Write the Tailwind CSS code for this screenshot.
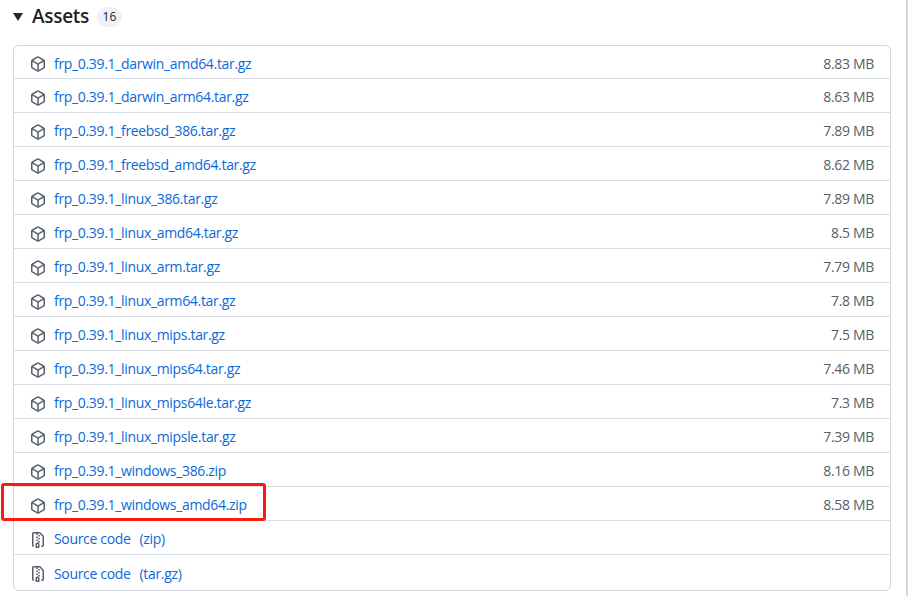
<!doctype html>
<html>
<head>
<meta charset="utf-8">
<title>Assets</title>
<script src="https://cdn.jsdelivr.net/npm/@tailwindcss/browser@4"></script>
</head>
<body class="bg-white">
<svg class="hidden">
  <symbol id="pkg" viewBox="0 0 16 16"><path d="m8.878.392 5.25 3.045c.54.314.872.89.872 1.514v6.098a1.75 1.75 0 0 1-.872 1.514l-5.25 3.045a1.75 1.75 0 0 1-1.756 0l-5.25-3.045A1.75 1.75 0 0 1 1 11.049V4.951c0-.624.332-1.201.872-1.514L7.122.392a1.75 1.75 0 0 1 1.756 0ZM7.875 1.69l-4.63 2.685L8 7.133l4.755-2.758-4.63-2.685a.248.248 0 0 0-.25 0ZM2.5 5.677v5.372c0 .09.047.171.125.216l4.625 2.683V8.432Zm6.25 8.271 4.625-2.683a.25.25 0 0 0 .125-.216V5.677L8.75 8.432Z"/></symbol>
  <symbol id="zip" viewBox="0 0 16 16"><path d="M3.5 1.75v11.5c0 .09.048.173.126.217a.75.75 0 0 1-.752 1.298A1.748 1.748 0 0 1 2 13.25V1.75C2 .784 2.784 0 3.75 0h5.586c.464 0 .909.185 1.237.513l2.914 2.914c.329.328.513.773.513 1.237v8.586A1.75 1.75 0 0 1 12.25 15h-.5a.75.75 0 0 1 0-1.5h.5a.25.25 0 0 0 .25-.25V4.664a.25.25 0 0 0-.073-.177L9.513 1.573a.25.25 0 0 0-.177-.073H7.25a.75.75 0 0 1 0 1.5h-.5a.75.75 0 0 1 0-1.5h-3a.25.25 0 0 0-.25.25Zm3.75 8.75h.5c.966 0 1.75.784 1.75 1.75v3a.75.75 0 0 1-.75.75h-2.5a.75.75 0 0 1-.75-.75v-3c0-.966.784-1.75 1.75-1.75ZM6 5.25a.75.75 0 0 1 .75-.75h.5a.75.75 0 0 1 0 1.5h-.5A.75.75 0 0 1 6 5.25Zm.75 2.25h.5a.75.75 0 0 1 0 1.5h-.5a.75.75 0 0 1 0-1.5ZM8 6.75A.75.75 0 0 1 8.75 6h.5a.75.75 0 0 1 0 1.5h-.5A.75.75 0 0 1 8 6.75ZM8.75 3h.5a.75.75 0 0 1 0 1.5h-.5a.75.75 0 0 1 0-1.5ZM8 9.75A.75.75 0 0 1 8.75 9h.5a.75.75 0 0 1 0 1.5h-.5A.75.75 0 0 1 8 9.75Zm-1 2.5v2.25h1v-2.25a.25.25 0 0 0-.25-.25h-.5a.25.25 0 0 0-.25.25Z"/></symbol>
</svg>
<div class="w-[908px] h-[596px] overflow-hidden border-r-2 border-[#d0d7de] pl-[13px] pr-[15px] font-['Open_Sans',sans-serif]">
  <div class="flex items-center h-[34px] text-[#1f2328]">
    <svg class="w-[10px] h-[8px]" viewBox="0 0 10 8"><path fill="#24292f" d="M0 0h10L5 8Z"/></svg>
    <span class="ml-[9px] pb-[2px] text-[19px] tracking-[-0.3px] font-semibold leading-none">Assets</span>
    <span class="ml-[8px] w-[25px] h-[20px] rounded-full bg-[#eff2f5] text-[12px] font-medium flex items-center justify-center">16</span>
  </div>
  <div class="mt-[11px] border border-[#d0d7de] rounded-md divide-y divide-[#d8dee4] text-[14px] tracking-[-0.33px]">
    <div class="flex items-center h-[33px] pt-[2px] px-4">
      <svg class="w-4 h-4 mt-[2px] fill-[#57606a]"><use href="#pkg"/></svg>
      <a class="ml-2 text-[#0969da] font-medium">frp_0.39.1_darwin_amd64.tar.gz</a>
      <span class="ml-auto text-[#57606a]">8.83 MB</span>
    </div>
    <div class="flex items-center h-[34px] pt-[2px] px-4">
      <svg class="w-4 h-4 mt-[2px] fill-[#57606a]"><use href="#pkg"/></svg>
      <a class="ml-2 text-[#0969da] font-medium">frp_0.39.1_darwin_arm64.tar.gz</a>
      <span class="ml-auto text-[#57606a]">8.63 MB</span>
    </div>
    <div class="flex items-center h-[34px] pt-[2px] px-4">
      <svg class="w-4 h-4 mt-[2px] fill-[#57606a]"><use href="#pkg"/></svg>
      <a class="ml-2 text-[#0969da] font-medium">frp_0.39.1_freebsd_386.tar.gz</a>
      <span class="ml-auto text-[#57606a]">7.89 MB</span>
    </div>
    <div class="flex items-center h-[34px] pt-[2px] px-4">
      <svg class="w-4 h-4 mt-[2px] fill-[#57606a]"><use href="#pkg"/></svg>
      <a class="ml-2 text-[#0969da] font-medium">frp_0.39.1_freebsd_amd64.tar.gz</a>
      <span class="ml-auto text-[#57606a]">8.62 MB</span>
    </div>
    <div class="flex items-center h-[34px] pt-[2px] px-4">
      <svg class="w-4 h-4 mt-[2px] fill-[#57606a]"><use href="#pkg"/></svg>
      <a class="ml-2 text-[#0969da] font-medium">frp_0.39.1_linux_386.tar.gz</a>
      <span class="ml-auto text-[#57606a]">7.89 MB</span>
    </div>
    <div class="flex items-center h-[34px] pt-[2px] px-4">
      <svg class="w-4 h-4 mt-[2px] fill-[#57606a]"><use href="#pkg"/></svg>
      <a class="ml-2 text-[#0969da] font-medium">frp_0.39.1_linux_amd64.tar.gz</a>
      <span class="ml-auto text-[#57606a]">8.5 MB</span>
    </div>
    <div class="flex items-center h-[34px] pt-[2px] px-4">
      <svg class="w-4 h-4 mt-[2px] fill-[#57606a]"><use href="#pkg"/></svg>
      <a class="ml-2 text-[#0969da] font-medium">frp_0.39.1_linux_arm.tar.gz</a>
      <span class="ml-auto text-[#57606a]">7.79 MB</span>
    </div>
    <div class="flex items-center h-[34px] pt-[2px] px-4">
      <svg class="w-4 h-4 mt-[2px] fill-[#57606a]"><use href="#pkg"/></svg>
      <a class="ml-2 text-[#0969da] font-medium">frp_0.39.1_linux_arm64.tar.gz</a>
      <span class="ml-auto text-[#57606a]">7.8 MB</span>
    </div>
    <div class="flex items-center h-[34px] pt-[2px] px-4">
      <svg class="w-4 h-4 mt-[2px] fill-[#57606a]"><use href="#pkg"/></svg>
      <a class="ml-2 text-[#0969da] font-medium">frp_0.39.1_linux_mips.tar.gz</a>
      <span class="ml-auto text-[#57606a]">7.5 MB</span>
    </div>
    <div class="flex items-center h-[34px] pt-[2px] px-4">
      <svg class="w-4 h-4 mt-[2px] fill-[#57606a]"><use href="#pkg"/></svg>
      <a class="ml-2 text-[#0969da] font-medium">frp_0.39.1_linux_mips64.tar.gz</a>
      <span class="ml-auto text-[#57606a]">7.46 MB</span>
    </div>
    <div class="flex items-center h-[34px] pt-[2px] px-4">
      <svg class="w-4 h-4 mt-[2px] fill-[#57606a]"><use href="#pkg"/></svg>
      <a class="ml-2 text-[#0969da] font-medium">frp_0.39.1_linux_mips64le.tar.gz</a>
      <span class="ml-auto text-[#57606a]">7.3 MB</span>
    </div>
    <div class="flex items-center h-[34px] pt-[2px] px-4">
      <svg class="w-4 h-4 mt-[2px] fill-[#57606a]"><use href="#pkg"/></svg>
      <a class="ml-2 text-[#0969da] font-medium">frp_0.39.1_linux_mipsle.tar.gz</a>
      <span class="ml-auto text-[#57606a]">7.39 MB</span>
    </div>
    <div class="flex items-center h-[34px] pt-[2px] px-4">
      <svg class="w-4 h-4 mt-[2px] fill-[#57606a]"><use href="#pkg"/></svg>
      <a class="ml-2 text-[#0969da] font-medium">frp_0.39.1_windows_386.zip</a>
      <span class="ml-auto text-[#57606a]">8.16 MB</span>
    </div>
    <div class="relative flex items-center h-[34px] pt-[2px] px-4">
      <svg class="w-4 h-4 mt-[2px] fill-[#57606a]"><use href="#pkg"/></svg>
      <a class="ml-2 text-[#0969da] font-medium">frp_0.39.1_windows_amd64.zip</a>
      <span class="ml-auto text-[#57606a]">8.58 MB</span>
      <div class="absolute left-[-13px] top-[-4px] w-[265px] h-[38px] border-[3px] border-[#fb1a10] rounded-[3px]"></div>
    </div>
    <div class="flex items-center h-[34px] pt-[2px] px-4">
      <svg class="w-4 h-4 mt-[2px] fill-[#57606a]"><use href="#zip"/></svg>
      <a class="ml-2 text-[#0969da] font-medium">Source code</a>
      <span class="ml-[9px] text-[#0969da]">(zip)</span>
    </div>
    <div class="flex items-center h-[35px] pt-[2px] pb-[1px] px-4">
      <svg class="w-4 h-4 mt-[2px] fill-[#57606a]"><use href="#zip"/></svg>
      <a class="ml-2 text-[#0969da] font-medium">Source code</a>
      <span class="ml-[9px] text-[#0969da]">(tar.gz)</span>
    </div>
  </div>
</div>
</body>
</html>
